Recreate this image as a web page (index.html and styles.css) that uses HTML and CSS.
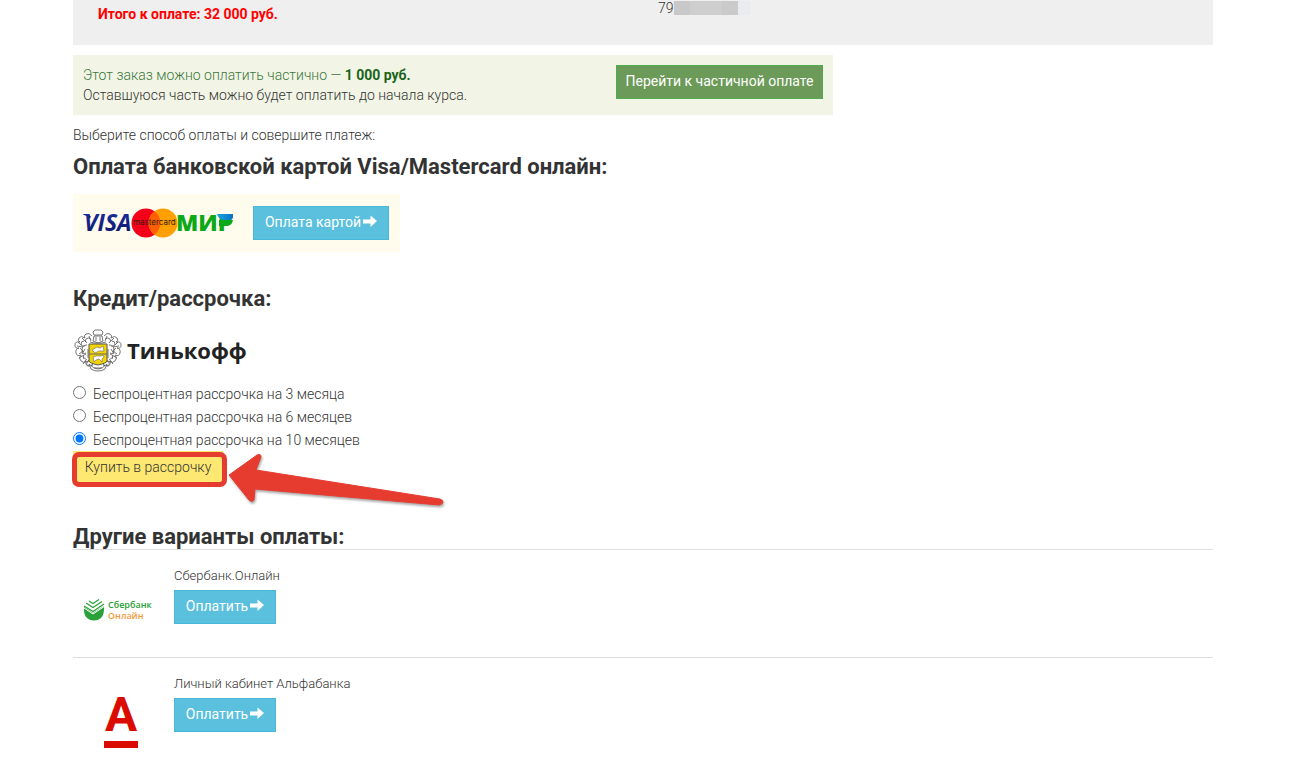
FILE: index.html
```html
<!DOCTYPE html>
<html lang="ru">
  <head>
    <meta charset="UTF-8" />
    <meta name="viewport" content="width=device-width, initial-scale=1.0" />
    <title>Оплата заказа</title>
    <link rel="stylesheet" href="styles.css">
  </head>
  <body>
    <svg class="symbols" aria-hidden="true">
      <symbol id="arrow-right" viewBox="0 0 14 14">
        <path d="M0 4.500h7.500V.5L14 6l-6.500 6V8.500H0z" fill="currentColor" />
      </symbol>
    </svg>

    <main class="container">
      <section class="order-info">
        <p class="order-total">Итого к оплате: 32 000 руб.</p>
        <p class="order-phone">79<span class="phone-mask"></span></p>
      </section>

      <section class="part-payment">
        <div>
          <p class="part-sum">Этот заказ можно оплатить частично — <strong>1 000 руб.</strong></p>
          <p>Оставшуюся часть можно будет оплатить до начала курса.</p>
        </div>
        <button type="button" class="btn btn-success">Перейти к частичной оплате</button>
      </section>

      <p class="hint">Выберите способ оплаты и совершите платеж:</p>

      <!-- Card payment -->
      <h3>Оплата банковской картой Visa/Mastercard онлайн:</h3>
      <div class="card-payment">
        <svg class="card-logos" viewBox="0 0 150 32" role="img" aria-label="Visa, Mastercard, МИР">
          <defs>
            <linearGradient id="visa-blue" x1="0" x2="0" y1="0" y2="1">
              <stop offset="0" stop-color="#1a2fa8" />
              <stop offset="1" stop-color="#0b1a66" />
            </linearGradient>
            <linearGradient id="mir-blue" x1="0" x2="1">
              <stop offset="0" stop-color="#15a5dc" />
              <stop offset="1" stop-color="#0b6fc4" />
            </linearGradient>
          </defs>
          <path d="M0 7h6l2 3-2 2Q4 8.500 0 7.600z" fill="url(#visa-blue)" />
          <text class="visa-name" x="1" y="24" fill="url(#visa-blue)">VISA</text>
          <circle cx="63" cy="16" r="14.500" fill="#f5001b" />
          <circle cx="80" cy="16" r="14.500" fill="#ff9f00" />
          <path d="M71.500 4.300a14.500 14.500 0 0 1 0 23.400 14.500 14.500 0 0 1 0-23.400z" fill="#ff5f00" />
          <text class="mastercard-name" x="50" y="18">mastercard</text>
          <text class="mir-name" x="93" y="24">МИР</text>
          <path d="M136 13h14q-1 6-7 6h-7z" fill="#0ba817" />
          <path d="M134 7h16q1 6-3 6h-6q-5 0-7-6z" fill="url(#mir-blue)" />
        </svg>
        <button type="button" class="btn btn-info">Оплата картой <svg class="icon" aria-hidden="true"><use href="#arrow-right" /></svg></button>
      </div>

      <!-- Credit -->
      <h3>Кредит/рассрочка:</h3>
      <form class="credit">
        <div class="tinkoff">
          <svg class="tinkoff-crest" viewBox="0 0 50 44" aria-hidden="true">
            <g fill="none" stroke="#666" stroke-width=".9">
              <g id="mantle">
                <path d="M19 8q-3-4-6-2t-1 4q-4-3-6 0t1 4q-5-1-5 3t4 3q-4 1-3 5t5 2q-3 3 0 6t5 0q-1 5 3 5t4-3" />
                <path d="M18 11q-3-2-5 0t1 4M11 13q-3 0-3 3t4 2M14 17q-5 0-5 5t4 3M7 20l3 3-4 3M13 26q-4 1-2 5M15 21v9M10 29l4 3M16 8l2 5M5 14l3 3M12 34l4-1" />
                <path d="M16 32q-4 4-1 6l5-1" />
                <path d="M9 10l4 4M4 18l6 1M6 30l5-3M12 21l-3 5M10 36l3-4" />
              </g>
              <use href="#mantle" transform="matrix(-1 0 0 1 50 0)" />
              <path d="M20 4l2-2h6l2 2-1 3h-8zM21 8h8l1 5-5 2-5-2zM23 9v4M27 9v4M17 14l4 1h8l4-1" />
              <path d="M16 36q5 5 9 5t9-5l-2 5q-3 2-7 2t-7-2z" fill="#fff" />
              <path d="M21 40h8" />
            </g>
            <path d="M16 16h18v17q0 2-9 4-9-2-9-4z" fill="#f3d400" stroke="#555" />
            <path d="M16 26h18" stroke="#666" />
            <path d="M19 22l5-3 3 1 3-2 1 5h-5l-4 2zM20 29l3-1h5l2-1 1 2-2 2v3l-3-3-3 1-2 2z" fill="#fff" stroke="#666" stroke-width=".6" />
          </svg>
          <span class="tinkoff-name">Тинькофф</span>
        </div>
        <label class="term"><input type="radio" name="term" value="3">Беспроцентная рассрочка на 3 месяца</label>
        <label class="term"><input type="radio" name="term" value="6">Беспроцентная рассрочка на 6 месяцев</label>
        <label class="term"><input type="radio" name="term" value="10" checked>Беспроцентная рассрочка на 10 месяцев</label>
        <div class="credit-action">
          <button type="button" class="btn btn-credit">Купить в рассрочку</button>
          <span class="highlight"></span>
          <svg class="pointer" viewBox="0 0 220 58" aria-hidden="true">
            <path d="M3 24L31 4q4-2 4 2l-5 13 184 29q3 1 3 3t-4 3L29 38l-1 11q-2 3-5 0z" fill="#e63c30" stroke="#e63c30" stroke-width="1" stroke-linejoin="round" />
          </svg>
        </div>
      </form>

      <!-- Other payment methods -->
      <h3>Другие варианты оплаты:</h3>
      <ul class="methods">
        <li class="method">
          <svg class="method-logo" viewBox="0 0 75 75" role="img" aria-label="Сбербанк Онлайн">
            <path d="M1 31l9 6 11-7q1 14-10 14.500Q0 44 1 31z" fill="#2aa039" />
            <path d="M1 32l9 6 12-8" fill="none" stroke="#fff" />
            <path d="M1 30l9 5.500L21 28M3 27l7 4.500 9-6M6 25l4 2.500 6-4" fill="none" stroke="#2aa039" stroke-width="1.300" />
            <text class="sber-name" x="25" y="32">Сбербанк</text>
            <text class="sber-name sber-online" x="25" y="43">Онлайн</text>
          </svg>
          <div>
            <p class="method-name">Сбербанк.Онлайн</p>
            <button type="button" class="btn btn-info">Оплатить <svg class="icon" aria-hidden="true"><use href="#arrow-right" /></svg></button>
          </div>
        </li>
        <li class="method">
          <svg class="method-logo" viewBox="0 0 75 75" role="img" aria-label="Альфа-Банк">
            <text class="alfa-name" x="38" y="47">А</text>
            <path d="M21 57h34v7H21z" fill="#da0b00" />
          </svg>
          <div>
            <p class="method-name">Личный кабинет Альфабанка</p>
            <button type="button" class="btn btn-info">Оплатить <svg class="icon" aria-hidden="true"><use href="#arrow-right" /></svg></button>
          </div>
        </li>
      </ul>
    </main>
  </body>
</html>
```
FILE: styles.css
```css
* {
  box-sizing: border-box;
  margin: 0;
  padding: 0;
}

body {
  padding-right: 26px;
  background-color: #fff;
  color: #333;
  font-family: Roboto, sans-serif;
  font-size: 14px;
  font-weight: 300;
  line-height: 20px;
}

.symbols {
  position: absolute;
  width: 0;
  height: 0;
}

.container {
  max-width: 1140px;
  margin: 0 auto;
}

h3 {
  color: #333;
  font-size: 22px;
  font-weight: 700;
  line-height: 24px;
}

/* Buttons */
.btn {
  display: inline-flex;
  align-items: center;
  justify-content: center;
  gap: 2px;
  height: 34px;
  padding: 0 8px 2px;
  border: 1px solid transparent;
  color: #fff;
  font-family: inherit;
  font-size: 14px;
  font-weight: 400;
  line-height: 20px;
  white-space: nowrap;
  cursor: pointer;
}

.btn-success {
  border-color: #4cae4c;
  background-color: #6c9a58;
}

.btn-info {
  border-color: #46b8da;
  background-color: #5bc0de;
}

.btn-credit {
  width: 150px;
  background-color: #ffe872;
  color: #333;
  font-weight: 300;
}

.icon {
  width: 14px;
  height: 14px;
}

/* Order */
.order-info {
  display: grid;
  grid-template-columns: 560px 1fr;
  height: 45px;
  padding-left: 25px;
  background-color: #efefef;
}

.order-total {
  padding-top: 4px;
  color: #f00;
  font-weight: 700;
}

.order-phone {
  display: flex;
  height: 16px;
  align-items: center;
}

.phone-mask {
  width: 76px;
  height: 14px;
  background: linear-gradient(to right, #c8c8c8 16px, #cecece 16px, #cecece 48px, #cacaca 48px, #cacaca 64px, #e9ebee 64px);
}

.part-payment {
  display: flex;
  justify-content: space-between;
  align-items: flex-start;
  max-width: 760px;
  margin: 10px 0;
  padding: 10px;
  background-color: #f2f5e5;
}

.part-sum {
  color: #3c763d;
}

.part-sum strong {
  color: #1a651a;
  font-weight: 700;
}

.part-payment .btn {
  min-width: 207px;
}

.hint {
  margin-bottom: 10px;
}

/* Card payment */
.card-payment {
  display: inline-flex;
  align-items: center;
  gap: 20px;
  height: 58px;
  margin: 15px 0 35px;
  padding: 0 11px 0 10px;
  background-color: #fffcee;
}

.card-payment .btn {
  min-width: 136px;
}

.card-logos {
  width: 150px;
  height: 32px;
}

.visa-name {
  font-family: "Open Sans", sans-serif;
  font-size: 23px;
  font-style: italic;
  font-weight: 700;
}

.mastercard-name {
  fill: #3a1a10;
  font-family: Inter, sans-serif;
  font-size: 8px;
  font-weight: 400;
}

.mir-name {
  fill: #0ba817;
  font-family: "Open Sans", sans-serif;
  font-size: 23px;
  font-weight: 800;
}

/* Credit */
.tinkoff {
  display: flex;
  align-items: center;
  gap: 4px;
  height: 44px;
  margin: 17px 0 10px;
}

.tinkoff-crest {
  width: 50px;
  height: 44px;
}

.tinkoff-name {
  color: #222;
  font-family: "Open Sans", sans-serif;
  font-size: 22px;
  font-weight: 700;
}

.term {
  display: flex;
  align-items: center;
  gap: 7px;
  width: fit-content;
  height: 23px;
}

.term input {
  width: 13px;
  height: 13px;
  margin-bottom: 3px;
}

.credit-action {
  position: relative;
  width: fit-content;
  margin-bottom: 40px;
}

.credit-action .btn {
  display: flex;
}

.highlight {
  position: absolute;
  top: 1px;
  left: -1px;
  width: 155px;
  height: 35px;
  border: 5px solid #e63c30;
  border-radius: 7px;
}

.pointer {
  position: absolute;
  top: 0;
  left: 153px;
  width: 220px;
  height: 58px;
  filter: drop-shadow(1px 2px 1px #0005);
}

/* Other methods */
.methods {
  list-style: none;
}

.method {
  display: flex;
  gap: 16px;
  padding: 16px 10px 0;
  border-top: 1px solid #ddd;
}

.method:not(:last-child) {
  padding-bottom: 6px;
}

.method-logo {
  width: 75px;
  height: 75px;
  margin-top: 10px;
}

.method-name {
  margin-bottom: 4px;
  font-size: 13px;
}

.method .btn {
  min-width: 102px;
}

.sber-name {
  fill: #2aa039;
  font-family: "Open Sans", sans-serif;
  font-size: 9px;
  font-weight: 600;
}

.sber-online {
  fill: #f59a3c;
}

.alfa-name {
  fill: #da0b00;
  font-family: Roboto, sans-serif;
  font-size: 48px;
  font-weight: 700;
  text-anchor: middle;
}
```
